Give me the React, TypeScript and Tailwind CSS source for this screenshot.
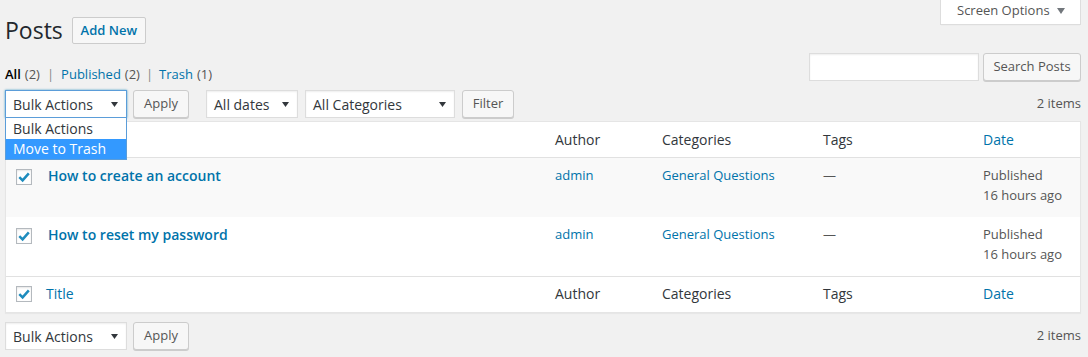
import React from "react";

const Arrow = () => (
  <svg width="7" height="5" viewBox="0 0 7 5" className="shrink-0">
    <path d="M0 0H7L3.5 5Z" fill="#32373c" />
  </svg>
);

function Checkbox() {
  return (
    <span className="flex h-[16px] w-[16px] items-center justify-center border border-[#b4b9be] bg-white shadow-[inset_0_1px_2px_rgba(0,0,0,0.1)]">
      <svg width="14" height="14" viewBox="0 0 14 14">
        <path d="M2.3 7.2 L5.6 10.4 L11.8 3.4" fill="none" stroke="#1e8cbe" strokeWidth="2.5" strokeLinejoin="miter" />
      </svg>
    </span>
  );
}

function Btn({ children, className }: { children: React.ReactNode; className: string }) {
  return (
    <div
      className={
        "flex h-[28px] items-center justify-center rounded-[3px] border border-[#ccc] bg-[#f7f7f7] text-[13px] text-[#555] shadow-[0_1px_0_#ccc] " +
        className
      }
    >
      {children}
    </div>
  );
}

function Select({ label, className }: { label: string; className: string }) {
  return (
    <div
      className={
        "flex h-[28px] items-center justify-between bg-white pl-[7px] pr-[8px] text-[14px] text-[#32373c] " +
        className
      }
    >
      <span>{label}</span>
      <Arrow />
    </div>
  );
}

function Row({ title, bg }: { title: string; bg: string }) {
  return (
    <div className={"grid h-[59px] grid-cols-[32px_1fr_107px_161px_160px_107px] " + bg}>
      <div className="pl-[10px] pt-[11px]">
        <Checkbox />
      </div>
      <div className="px-[10px] pt-[8px] text-[14px] font-semibold leading-[20px] text-[#0073aa]">{title}</div>
      <div className="px-[10px] pt-[8px] text-[13px] leading-[19.5px] text-[#0073aa]">admin</div>
      <div className="px-[10px] pt-[8px] text-[13px] leading-[19.5px] text-[#0073aa]">General Questions</div>
      <div className="px-[10px] pt-[8px] text-[13px] leading-[19.5px] text-[#555]">—</div>
      <div className="px-[10px] pt-[8px] text-[13px] leading-[19.5px] text-[#555]">
        <div>Published</div>
        <div>16 hours ago</div>
      </div>
    </div>
  );
}

function HeadRow({ border, pt, cbPt }: { border: string; pt: string; cbPt: string }) {
  return (
    <div className={"grid h-[36px] grid-cols-[32px_1fr_107px_161px_160px_107px] text-[14px] leading-[20px] text-[#32373c] " + border}>
      <div className={"pl-[10px] " + cbPt}>
        <Checkbox />
      </div>
      <div className={"pl-[8px] text-[#0073aa] " + pt}>Title</div>
      <div className={"px-[10px] " + pt}>Author</div>
      <div className={"px-[10px] " + pt}>Categories</div>
      <div className={"px-[10px] " + pt}>Tags</div>
      <div className={"px-[10px] text-[#0073aa] " + pt}>Date</div>
    </div>
  );
}

export default function App() {
  return (
    <div className="min-h-[357px] overflow-hidden bg-[#f1f1f1] pl-[5px] pr-[7px] font-['Open_Sans',sans-serif] text-[13px] text-[#444]">
      {/* Top row */}
      <div className="flex items-start justify-between">
        <div className="flex items-center pt-[16px]">
          <h1 className="text-[23px] font-normal leading-[29px] text-[#23282d]">Posts</h1>
          <div className="ml-[9px] flex h-[27px] w-[74px] items-center justify-center rounded-[2px] border border-[#ccc] bg-[#f7f7f7] text-[13px] font-semibold text-[#0073aa]">
            Add New
          </div>
        </div>
        <div className="flex h-[25px] w-[141px] items-start border-x border-b border-[#ddd] bg-white pl-[16px] pr-[15px] shadow-[0_1px_1px_-1px_rgba(0,0,0,0.1)]">
          <div className="flex h-[22px] w-full items-center justify-between text-[13px] text-[#555]">
            <span>Screen Options</span>
            <svg width="8" height="6" viewBox="0 0 8 6">
              <path d="M0 0H8L4 6Z" fill="#72777c" />
            </svg>
          </div>
        </div>
      </div>

      {/* Second row */}
      <div className="mt-[8px] flex h-[28px] items-start justify-between">
        <div className="mt-[11px] flex text-[13px] leading-[20px] text-[#666]">
          <span className="font-semibold text-black">All</span>
          <span className="ml-[4px] text-[#555]">(2)</span>
          <span className="mx-[7px] text-[#888]">|</span>
          <span className="text-[#0073aa]">Published</span>
          <span className="ml-[4px] text-[#555]">(2)</span>
          <span className="mx-[6px] text-[#888]">|</span>
          <span className="text-[#0073aa]">Trash</span>
          <span className="ml-[4px] text-[#555]">(1)</span>
        </div>
        <div className="flex gap-[4px]">
          <div className="h-[28px] w-[170px] border border-[#ddd] bg-white shadow-[inset_0_1px_2px_rgba(0,0,0,0.07)]" />
          <Btn className="w-[98px]">Search Posts</Btn>
        </div>
      </div>

      {/* Tablenav top */}
      <div className="mt-[9px] flex items-center justify-between">
        <div className="flex items-center">
          <div className="relative">
            <Select
              label="Bulk Actions"
              className="w-[122px] border border-[#5b9dd9] shadow-[0_0_2px_rgba(30,140,190,0.8)]"
            />
            <div className="absolute left-0 top-full z-10 w-[122px] border-x border-b border-[#5b9dd9] bg-white pt-[1px] text-[14px] leading-[20px]">
              <div className="h-[20px] pl-[7px] text-[#32373c]">Bulk Actions</div>
              <div className="h-[20px] bg-[#3399ff] pl-[7px] text-white">Move to Trash</div>
            </div>
          </div>
          <Btn className="ml-[6px] w-[56px]">Apply</Btn>
          <Select
            label="All dates"
            className="ml-[17px] w-[92px] border border-[#ddd] shadow-[inset_0_1px_2px_rgba(0,0,0,0.07)]"
          />
          <Select
            label="All Categories"
            className="ml-[7px] w-[150px] border border-[#ddd] shadow-[inset_0_1px_2px_rgba(0,0,0,0.07)]"
          />
          <Btn className="ml-[7px] w-[52px]">Filter</Btn>
        </div>
        <div className="text-[13px] text-[#555]">2 items</div>
      </div>

      {/* Table */}
      <div className="mt-[3px] border border-[#e5e5e5] bg-white shadow-[0_1px_1px_rgba(0,0,0,0.04)]">
        <HeadRow border="border-b border-[#e1e1e1]" pt="pt-[8px]" cbPt="pt-[10px]" />
        <Row title="How to create an account" bg="bg-[#f9f9f9]" />
        <Row title="How to reset my password" bg="bg-white" />
        <HeadRow border="border-t border-[#e1e1e1]" pt="pt-[7px]" cbPt="pt-[9px]" />
      </div>

      {/* Tablenav bottom */}
      <div className="mt-[9px] flex items-center justify-between">
        <div className="flex items-center">
          <Select
            label="Bulk Actions"
            className="w-[122px] border border-[#ddd] shadow-[inset_0_1px_2px_rgba(0,0,0,0.07)]"
          />
          <Btn className="ml-[6px] w-[56px]">Apply</Btn>
        </div>
        <div className="text-[13px] text-[#555]">2 items</div>
      </div>
    </div>
  );
}
